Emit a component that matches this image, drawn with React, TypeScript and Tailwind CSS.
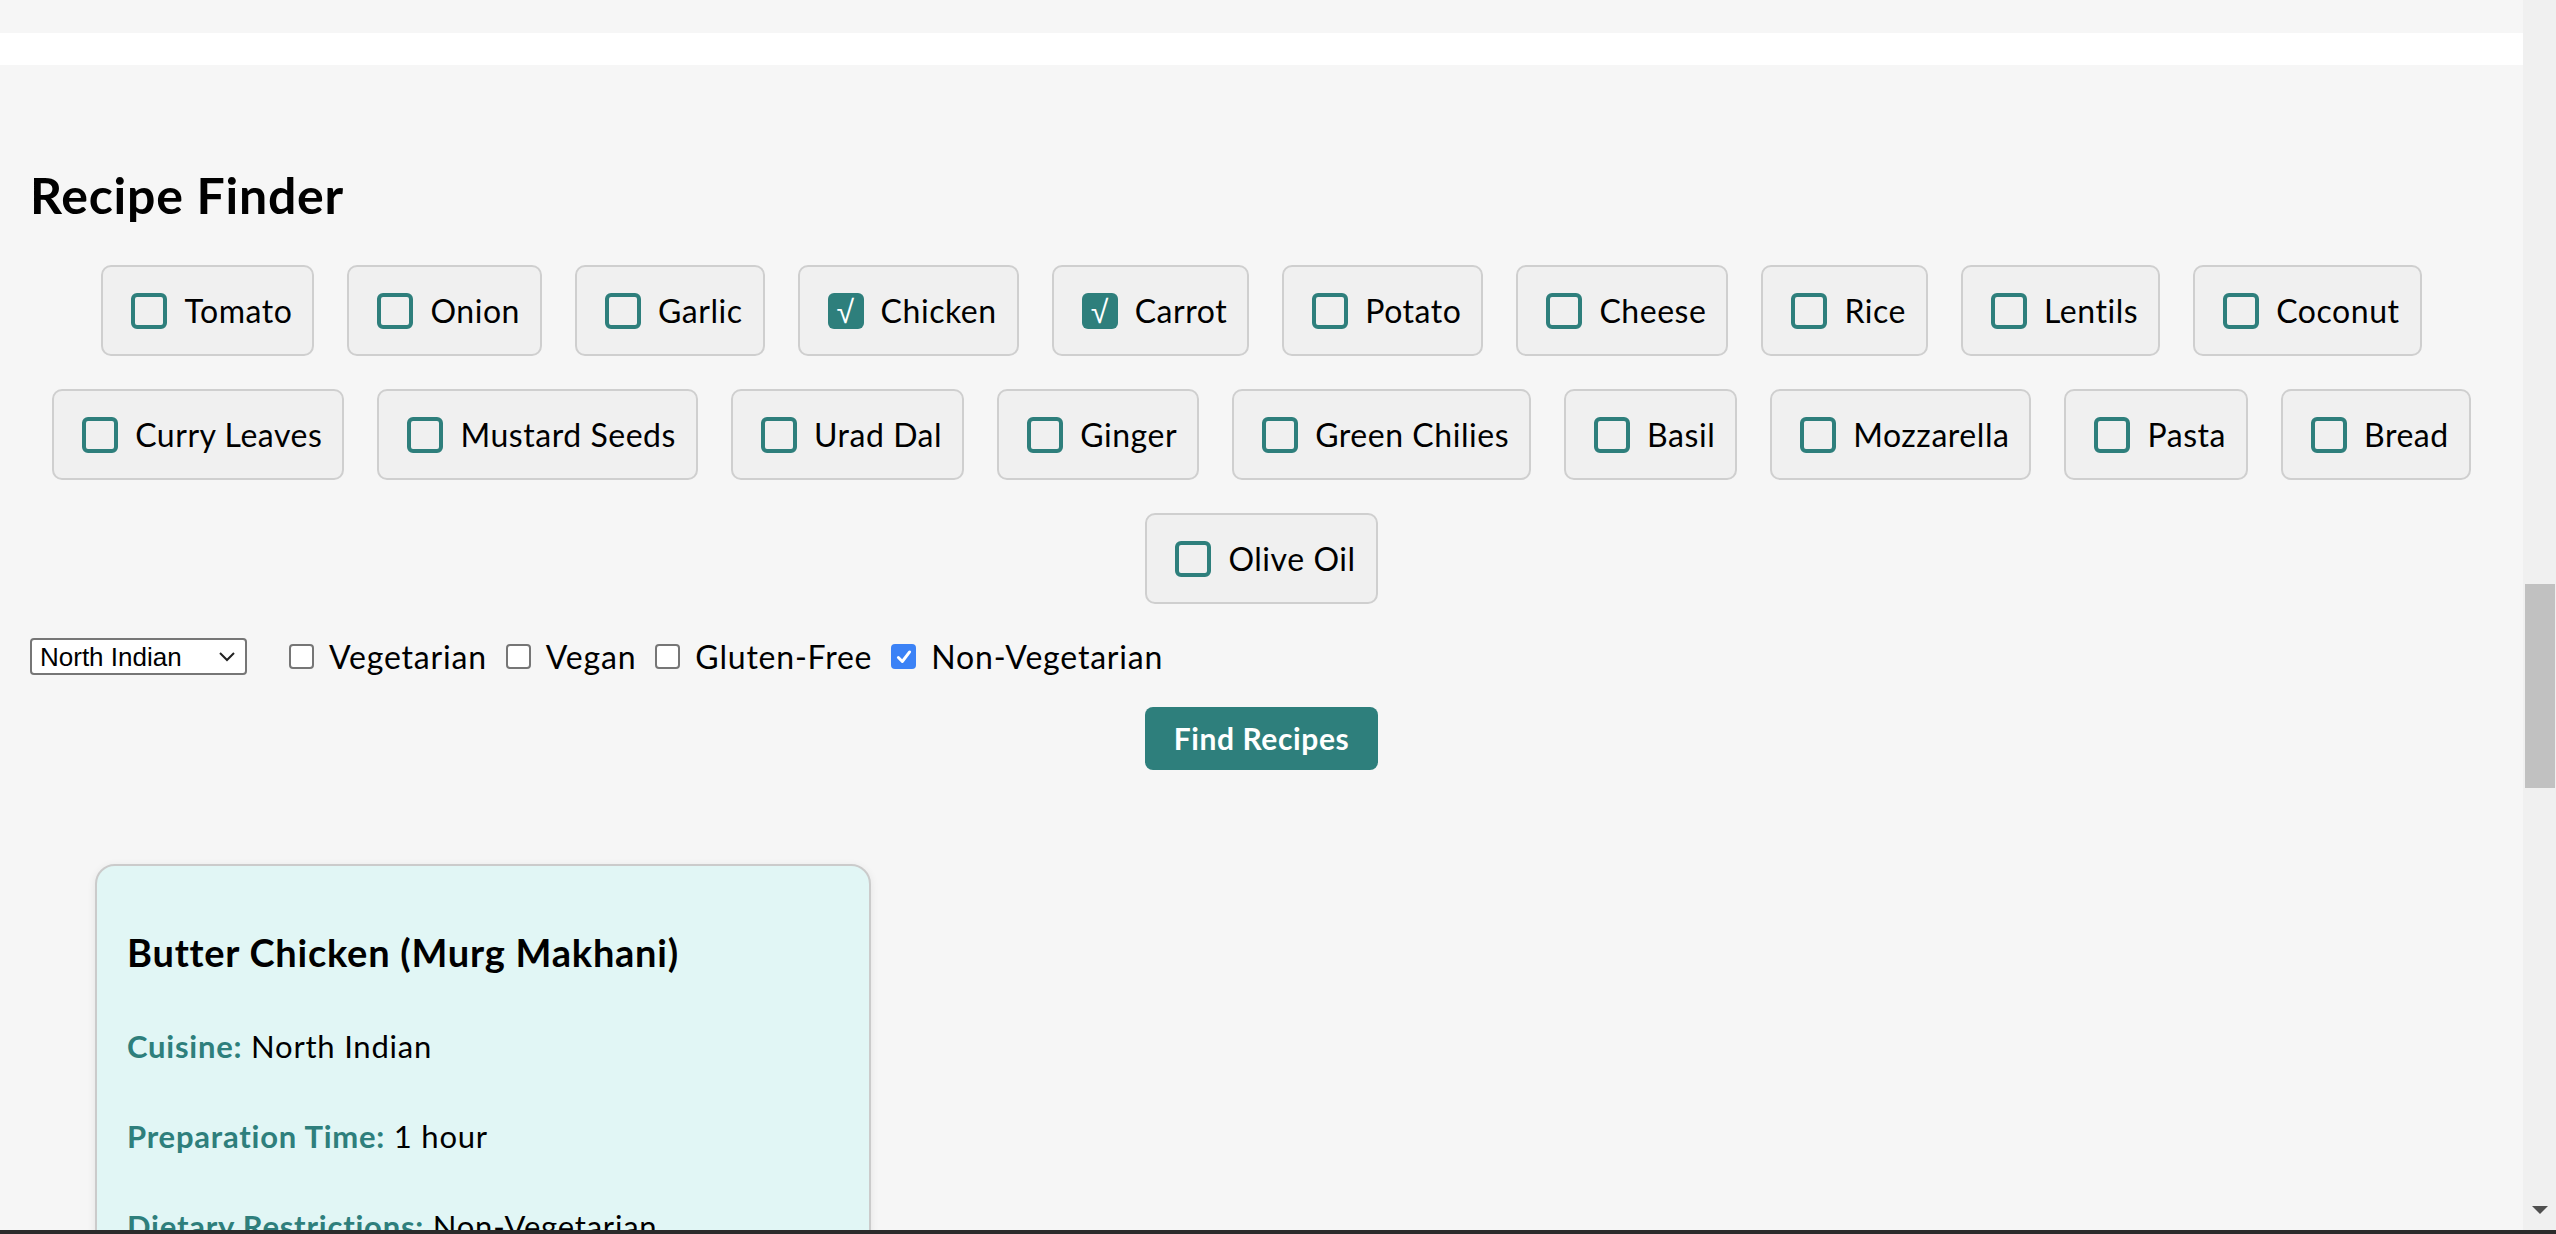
import React from "react";

const ingredientRows: string[][] = [
  ["Tomato", "Onion", "Garlic", "Chicken", "Carrot", "Potato", "Cheese", "Rice", "Lentils", "Coconut"],
  ["Curry Leaves", "Mustard Seeds", "Urad Dal", "Ginger", "Green Chilies", "Basil", "Mozzarella", "Pasta", "Bread"],
  ["Olive Oil"],
];

const selectedIngredients = ["Chicken", "Carrot"];

const diets = [
  { label: "Vegetarian", checked: false },
  { label: "Vegan", checked: false },
  { label: "Gluten-Free", checked: false },
  { label: "Non-Vegetarian", checked: true },
];

// Ingredient chip with the teal custom checkbox
const IngredientChip = ({ name, checked }: { name: string; checked: boolean }) => (
  <label className="flex h-[91px] items-center gap-[17px] rounded-[10px] border-2 border-[#cfcfcf] bg-[#f0f0f0] pl-[28px] pr-[20px] text-[32px] leading-none tracking-[0.017em] text-black">
    {checked ? (
      <span className="flex h-[36px] w-[36px] items-center justify-center rounded-[6px] bg-[#2e7f7c] pt-[2px] font-[family-name:'DejaVu_Sans',sans-serif] text-[32px] font-light leading-none text-white">
        √
      </span>
    ) : (
      <span className="h-[36px] w-[36px] rounded-[6px] border-4 border-[#2e7f7c]" />
    )}
    <span>{name}</span>
  </label>
);

const DietCheckbox = ({ label, checked }: { label: string; checked: boolean }) => (
  <label className="mr-[19px] flex items-center gap-[15px] text-[32px] leading-none tracking-[0.025em] text-black">
    {checked ? (
      <span className="flex h-[25px] w-[25px] items-center justify-center rounded-[4px] bg-[#3b82f6]">
        <svg width="18" height="18" viewBox="0 0 16 16" fill="none">
          <path d="M3 8.5 L6.5 12 L13 3.5" stroke="white" strokeWidth="2.6" strokeLinecap="round" strokeLinejoin="round" />
        </svg>
      </span>
    ) : (
      <span className="h-[25px] w-[25px] rounded-[4px] border-2 border-[#767676] bg-white" />
    )}
    <span>{label}</span>
  </label>
);

const Scrollbar = () => (
  <div className="flex w-[33px] flex-col bg-[#f0f0f0] pl-[2px]">
    <div className="h-[584px]" />
    <div className="h-[204px] w-[30px] bg-[#c1c1c1]" />
    <div className="flex-1" />
    <div className="flex h-[24px] justify-center pb-[14px] pr-[2px]">
      <svg width="16" height="8" viewBox="0 0 16 8">
        <path d="M0 0 H16 L8 8 Z" fill="#505050" />
      </svg>
    </div>
  </div>
);

export default function App() {
  return (
    <div className="flex h-[1234px] w-full flex-col overflow-hidden bg-[#f6f6f6] font-[family-name:Lato,sans-serif]">
      <div className="flex flex-1 overflow-hidden">
        <main className="flex-1 overflow-hidden pt-[33px]">
          <div className="h-[32px] bg-white" />

          <div className="px-[30px]">
            <h2 className="mt-[102px] text-[50px] font-bold leading-[56px] tracking-[0.015em] text-black">Recipe Finder</h2>

            {/* --- INGREDIENTS --- */}
            <div className="mt-[42px] flex flex-col gap-[33px]">
              {ingredientRows.map((row, i) => (
                <div key={i} className="flex justify-center gap-[33px]">
                  {row.map((name) => (
                    <IngredientChip key={name} name={name} checked={selectedIngredients.includes(name)} />
                  ))}
                </div>
              ))}
            </div>

            {/* --- FILTERS --- */}
            <div className="mt-[34px] flex items-center">
              <div className="flex h-[37px] w-[217px] items-center justify-between rounded-[4px] border-2 border-[#767676] bg-white pl-[8px] pr-[9px] font-[family-name:'Liberation_Sans',Arial,sans-serif] text-[26px] leading-none text-black">
                <span>North Indian</span>
                <svg width="18" height="11" viewBox="0 0 18 11" fill="none">
                  <path d="M2 2 L9 9 L16 2" stroke="#222" strokeWidth="2" />
                </svg>
              </div>
              <div className="ml-[42px] flex items-center">
                {diets.map((d) => (
                  <DietCheckbox key={d.label} label={d.label} checked={d.checked} />
                ))}
              </div>
            </div>

            <div className="mt-[32px] flex justify-center">
              <button className="h-[63px] w-[233px] rounded-[8px] bg-[#2e7f7c] text-[30px] font-bold tracking-[0.02em] text-white">
                Find Recipes
              </button>
            </div>

            {/* --- RESULTS --- */}
            <div className="ml-[65px] mt-[94px] w-[776px] rounded-[20px] border-2 border-[#cbcbcb] bg-[#e1f6f5] px-[30px] pt-[64px] shadow-[0_2px_8px_rgba(0,0,0,0.08)]">
              <h3 className="text-[38px] font-bold leading-[44px] tracking-[0.02em] text-black">Butter Chicken (Murg Makhani)</h3>
              <div className="mt-[52px] flex flex-col gap-[50px] text-[31px] leading-[40px] tracking-[0.025em] text-black">
                <p>
                  <span className="font-bold text-[#2e7f7c]">Cuisine:</span> North Indian
                </p>
                <p>
                  <span className="font-bold text-[#2e7f7c]">Preparation Time:</span> 1 hour
                </p>
                <p>
                  <span className="font-bold text-[#2e7f7c]">Dietary Restrictions:</span> Non-Vegetarian
                </p>
                <p>
                  <span className="font-bold text-[#2e7f7c]">Ingredients:</span> Chicken, Butter, Tomato
                </p>
              </div>
            </div>
          </div>
        </main>
        <Scrollbar />
      </div>
      <div className="h-[4px] bg-[#2b2b2b]" />
    </div>
  );
}
